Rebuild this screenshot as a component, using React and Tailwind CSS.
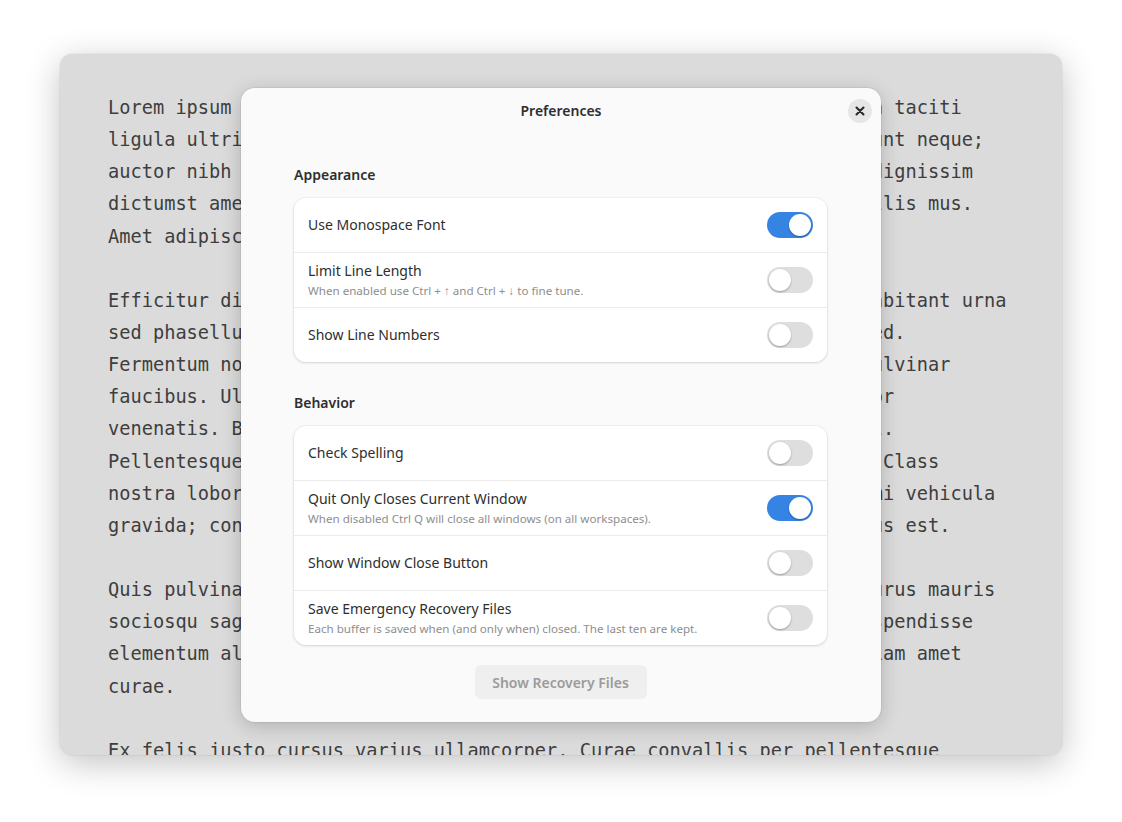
import React from "react";

const lines = [
  "Lorem ipsum dolor sit amet consectetur adipiscing elit sociosqu nulla taciti",
  "ligula ultricies mauris vestibulum primis lectus inceptos nec tincidunt neque;",
  "auctor nibh cursus feugiat eleifend aliquet congue porta netus arcu dignissim",
  "dictumst amet dapibus varius nascetur parturient montes magna est mollis mus.",
  "Amet adipiscing lacus viverra porttitor commodo.",
  "",
  "Efficitur diam primis malesuada ultrices posuere morbi senectus et habitant urna",
  "sed phasellus magnis lobortis pharetra rutrum imperdiet tempus leo sed.",
  "Fermentum non lacinia fringilla tortor vehicula iaculis eros nulla pulvinar",
  "faucibus. Ullamcorper sagittis facilisis semper augue ac dictum tortor",
  "venenatis. Bibendum placerat sollicitudin vulputate euismod quam nisl.",
  "Pellentesque etiam cubilia condimentum accumsan hac mattis ligula mi Class",
  "nostra lobortis natoque eget convallis dignissim risus quisque nunc mi vehicula",
  "gravida; consequat volutpat semper orci fames neque interdum per lacus est.",
  "",
  "Quis pulvinar aptent tellus dictum velit blandit feugiat enim odio purus mauris",
  "sociosqu sagittis conubia hendrerit turpis potenti aenean nec dui suspendisse",
  "elementum aliquet torquent massa luctus porta sapien ante nunc leo diam amet",
  "curae.",
  "",
  "Ex felis justo cursus varius ullamcorper. Curae convallis per pellentesque",
];

function Switch({ on }) {
  return (
    <div
      className={
        "relative w-[46px] h-[26px] rounded-full shrink-0 " +
        (on ? "bg-[#3584e4]" : "bg-[#dedede]")
      }
    >
      <div
        className={
          "absolute top-[2px] w-[22px] h-[22px] rounded-full bg-white shadow-[0_1px_2px_rgba(0,0,0,0.3)] " +
          (on ? "left-[22px]" : "left-[2px]")
        }
      />
    </div>
  );
}

function Row({ title, subtitle, on, last }) {
  return (
    <div
      className={
        "flex items-center justify-between pl-[14px] pr-[14px] " +
        (last ? "h-[54px]" : "h-[55px] border-b border-[#ebebeb]")
      }
    >
      <div className="flex flex-col">
        <div className="text-[14px] leading-[20px] text-[#2e2e2e]">{title}</div>
        {subtitle && (
          <div className="text-[11.6px] leading-[16px] text-[#8e8e8e] mt-[2px]">
            {subtitle}
          </div>
        )}
      </div>
      <Switch on={on} />
    </div>
  );
}

function Group({ title, rows }) {
  return (
    <div className="flex flex-col">
      <div className="text-[14px] leading-[20px] font-semibold text-[#2e2e2e] mb-[13px]">
        {title}
      </div>
      <div className="bg-white rounded-[12px] shadow-[0_0_0_1px_rgba(0,0,0,0.03),0_1px_3px_rgba(0,0,0,0.13)] flex flex-col">
        {rows.map((r, i) => (
          <Row key={i} {...r} last={i === rows.length - 1} />
        ))}
      </div>
    </div>
  );
}

export default function App() {
  return (
    <div
      className="w-[1122px] h-[822px] bg-white relative overflow-hidden pl-[60px] pt-[54px]"
      style={{ fontFamily: '"Noto Sans", sans-serif' }}
    >
      <div className="w-[1002px] h-[701px] rounded-[12px] bg-[#dbdbdb] shadow-[0_8px_34px_rgba(0,0,0,0.24),0_0_0_1px_rgba(0,0,0,0.04)] overflow-hidden pl-[48px] pt-[38px]">
        <div
          className="text-[18.67px] leading-[32.15px] text-[#3e3e3e]"
          style={{ fontFamily: '"DejaVu Sans Mono", monospace' }}
        >
          {lines.map((l, i) => (
            <div key={i} className="whitespace-pre h-[32.15px]">
              {l}
            </div>
          ))}
        </div>
      </div>

      <div className="absolute left-[241px] top-[88px] w-[640px] h-[634px] rounded-[14px] bg-[#fafafa] shadow-[0_4px_20px_rgba(0,0,0,0.2),0_0_0_1px_rgba(0,0,0,0.05)] flex flex-col">
        <div className="relative h-[45px] flex items-center justify-center">
          <div className="text-[14px] font-semibold text-[#2e2e2e]">Preferences</div>
          <div className="absolute right-[9px] top-[11px] w-[24px] h-[24px] rounded-full bg-[#e6e6e6] flex items-center justify-center">
            <svg width="10" height="10" viewBox="0 0 10 10">
              <path
                d="M1.5 1.5 L8.5 8.5 M8.5 1.5 L1.5 8.5"
                stroke="#2a2a2a"
                strokeWidth="2.1"
                strokeLinecap="round"
              />
            </svg>
          </div>
        </div>
        <div className="flex flex-col pl-[53px] pr-[54px] pt-[32px] gap-[31px]">
          <Group
            title="Appearance"
            rows={[
              { title: "Use Monospace Font", on: true },
              {
                title: "Limit Line Length",
                subtitle: "When enabled use Ctrl + \u2191 and Ctrl + \u2193 to fine tune.",
                on: false,
              },
              { title: "Show Line Numbers", on: false },
            ]}
          />
          <Group
            title="Behavior"
            rows={[
              { title: "Check Spelling", on: false },
              {
                title: "Quit Only Closes Current Window",
                subtitle: "When disabled Ctrl Q will close all windows (on all workspaces).",
                on: true,
              },
              { title: "Show Window Close Button", on: false },
              {
                title: "Save Emergency Recovery Files",
                subtitle: "Each buffer is saved when (and only when) closed. The last ten are kept.",
                on: false,
              },
            ]}
          />
          <div className="flex justify-center -mt-[11px]">
            <div className="w-[172px] h-[34px] rounded-[6px] bg-[#efefef] flex items-center justify-center text-[14px] font-semibold text-[#9b9b9b]">
              Show Recovery Files
            </div>
          </div>
        </div>
      </div>
    </div>
  );
}
